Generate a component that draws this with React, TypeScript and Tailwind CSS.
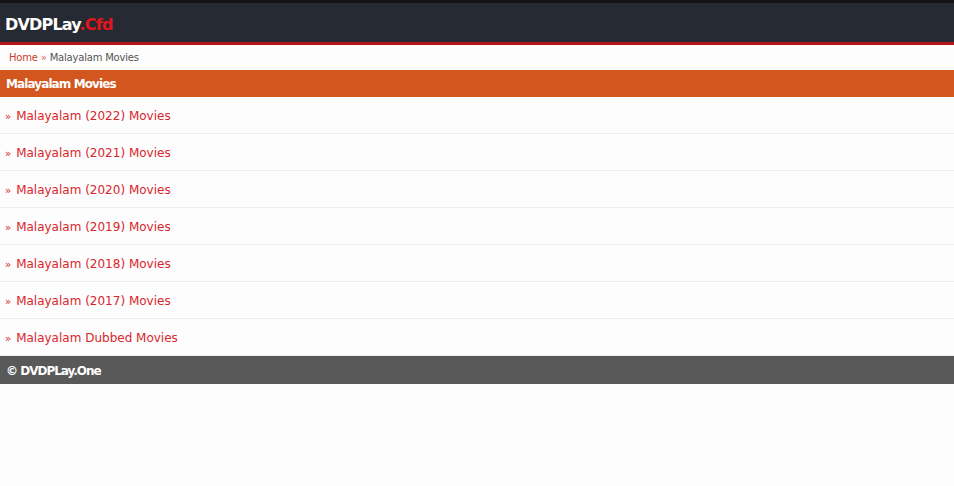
import React from 'react';

const years = ['2022', '2021', '2020', '2019', '2018', '2017'];

function CategoryRow({ label }: { label: string }) {
  return (
    <a
      href="#"
      className="flex h-[37px] items-center border-b border-[#efefef] pt-[2px] pl-[5px] text-[12px] text-[#d9262c]"
    >
      <span className="mr-[5px] text-[10px]">»</span>
      {label}
    </a>
  );
}

export default function App() {
  return (
    <div className="min-h-[486px] bg-[#fdfdfd] font-['DejaVu_Sans',Tahoma,sans-serif]">
      <header className="flex h-[45px] items-center border-t-[3px] border-b-[3px] border-t-[#151515] border-b-[#b3171c] bg-[#262a33] pt-[4px] pl-[5px]">
        <span className="text-[16px] font-bold tracking-[-0.8px] text-white">
          DVDPLay<span className="text-[#e3151c]">.Cfd</span>
        </span>
      </header>

      <nav className="flex h-[25px] items-center pl-[9px] text-[10px] tracking-[-0.2px] text-[#555]">
        <a href="#" className="text-[#c8412a]">Home</a>
        <span className="mx-[3px] text-[#d06a55]">»</span>
        <span>Malayalam Movies</span>
      </nav>

      <h2 className="flex h-[27px] items-center bg-[#d3561f] pt-[1px] pl-[6px] text-[12px] font-bold tracking-[-0.9px] text-white">
        Malayalam Movies
      </h2>

      <div className="flex flex-col">
        {years.map((y) => (
          <CategoryRow key={y} label={`Malayalam (${y}) Movies`} />
        ))}
        <CategoryRow label="Malayalam Dubbed Movies" />
      </div>

      <footer className="-mt-px flex h-[29px] items-center bg-[#595959] pt-[2px] pl-[6px] text-[12px] font-bold tracking-[-1px] text-white">
        © DVDPLay.One
      </footer>
    </div>
  );
}
